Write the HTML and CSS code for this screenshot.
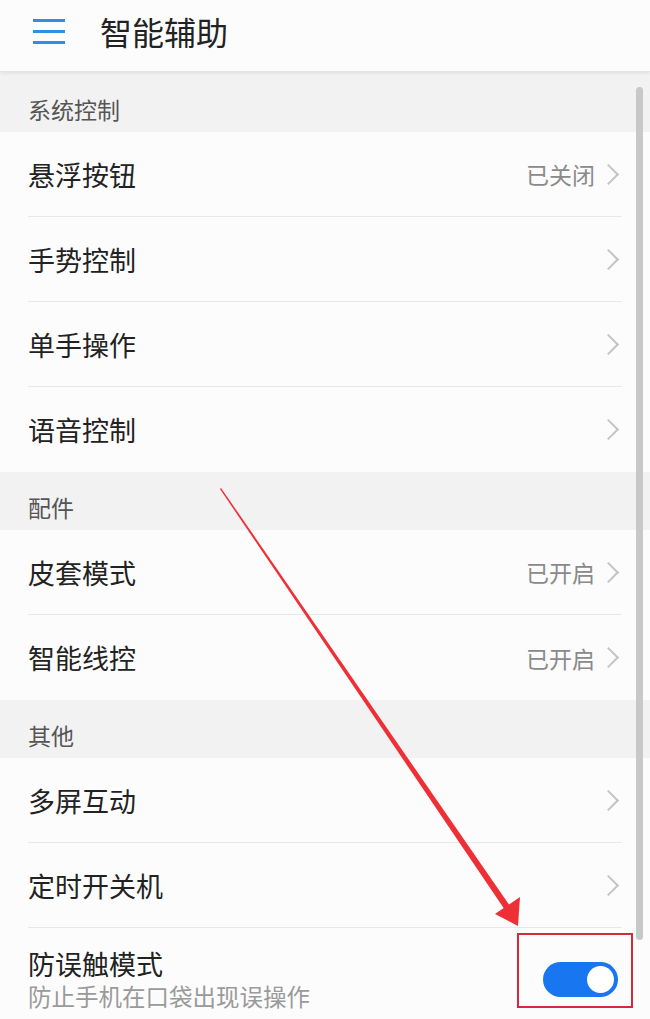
FILE: index.html
```html
<!DOCTYPE html>
<html lang="zh-cn">

<head>
    <meta charset="UTF-8">
    <meta name="viewport" content="width=device-width, initial-scale=1.0">
    <title>智能辅助</title>
    <link rel="stylesheet" href="styles.css">
</head>

<body>
    <!-- 顶部标题栏 -->
    <div class="topbar">
        <div class="menu-icon">
            <span></span>
            <span></span>
            <span></span>
        </div>
        <h1>智能辅助</h1>
    </div>

    <div class="list">
        <div class="section first">系统控制</div>
        <div class="row">
            <span class="label">悬浮按钮</span>
            <span class="value">已关闭</span>
            <span class="chevron"></span>
        </div>
        <div class="row">
            <span class="label">手势控制</span>
            <span class="chevron"></span>
        </div>
        <div class="row">
            <span class="label">单手操作</span>
            <span class="chevron"></span>
        </div>
        <div class="row last">
            <span class="label">语音控制</span>
            <span class="chevron"></span>
        </div>

        <div class="section">配件</div>
        <div class="row">
            <span class="label">皮套模式</span>
            <span class="value">已开启</span>
            <span class="chevron"></span>
        </div>
        <div class="row last">
            <span class="label">智能线控</span>
            <span class="value">已开启</span>
            <span class="chevron"></span>
        </div>

        <div class="section">其他</div>
        <div class="row">
            <span class="label">多屏互动</span>
            <span class="chevron"></span>
        </div>
        <div class="row">
            <span class="label">定时开关机</span>
            <span class="chevron"></span>
        </div>
        <div class="row tall last">
            <div class="texts">
                <span class="label">防误触模式</span>
                <span class="sub">防止手机在口袋出现误操作</span>
            </div>
            <div class="switch on"><span class="knob"></span></div>
        </div>
    </div>

    <!-- 滚动条 -->
    <div class="scrollbar"></div>

    <!-- 标注：红色箭头和方框 -->
    <svg class="annotation" width="650" height="1019" viewBox="0 0 650 1019">
        <polygon points="220,489 221,488 510,906 505,910" fill="#ee2f36" />
        <polygon points="518,926 495,914 520,897" fill="#ee2f36" />
    </svg>
    <div class="mark-box"></div>
</body>

</html>
```

FILE: styles.css
```css
/* 页面整体 */
body {
    margin: 0;
    padding: 0;
    width: 650px;
    height: 1019px;
    overflow: hidden;
    background-color: #fcfcfc;
    font-family: "Noto Sans CJK SC", "Noto Sans", sans-serif;
    position: relative;
}

/* 顶部标题栏 */
.topbar {
    height: 72px;
    display: flex;
    align-items: center;
    padding-left: 33px;
    padding-bottom: 9px;
    box-sizing: border-box;
    background-color: #fcfcfc;
    border-bottom: 1px solid #e4e4e4;
    box-shadow: 0px 2px 3px rgba(0, 0, 0, 0.06);
    position: relative;
    z-index: 1;
}

.menu-icon {
    width: 32px;
    display: flex;
    flex-direction: column;
    gap: 8px;
    margin-right: 35px;
}

.menu-icon span {
    display: block;
    height: 3px;
    background-color: #2f8ee5;
}

.topbar h1 {
    margin: 0;
    font-size: 32px;
    font-weight: normal;
    color: #222;
}

/* 分组标题 */
.section {
    height: 58px;
    display: flex;
    align-items: flex-end;
    padding: 0 0 6px 28px;
    box-sizing: border-box;
    background-color: #f2f2f2;
    font-size: 23px;
    color: #555;
}

.section.first {
    height: 60px;
}

/* 列表行 */
.row {
    height: 85px;
    margin: 0 28px;
    display: flex;
    align-items: center;
    border-bottom: 1px solid #e8e8e8;
    box-sizing: border-box;
}

.row.last {
    border-bottom: none;
}

.row.tall {
    height: 92px;
    padding-top: 10px;
}

.label {
    flex: 1;
    font-size: 27px;
    color: #222;
}

.value {
    font-size: 23px;
    color: #8a8a8a;
    margin-right: 6px;
}

.chevron {
    width: 13px;
    height: 13px;
    border-top: 2px solid #c4c4c4;
    border-right: 2px solid #c4c4c4;
    transform: rotate(45deg);
    margin-right: 6px;
}

.texts {
    flex: 1;
    display: flex;
    flex-direction: column;
}

.texts .label {
    line-height: 34px;
}

.sub {
    font-size: 23.5px;
    color: #9a9a9a;
    line-height: 30px;
}

/* 开关 */
.switch {
    width: 75px;
    height: 35px;
    border-radius: 18px;
    background-color: #1877f0;
    display: flex;
    align-items: center;
    justify-content: flex-end;
    padding: 0 4px;
    box-sizing: border-box;
    margin-right: 4px;
}

.knob {
    width: 27px;
    height: 27px;
    border-radius: 50%;
    background-color: #fff;
}

/* 滚动条 */
.scrollbar {
    position: absolute;
    left: 636px;
    top: 87px;
    width: 7px;
    height: 853px;
    border-radius: 4px;
    background-color: #c8c8c8;
}

/* 标注 */
.annotation {
    position: absolute;
    left: 0;
    top: 0;
    pointer-events: none;
}

.mark-box {
    position: absolute;
    left: 517px;
    top: 933px;
    width: 112px;
    height: 71px;
    border: 2px solid #d8283c;
}
```
